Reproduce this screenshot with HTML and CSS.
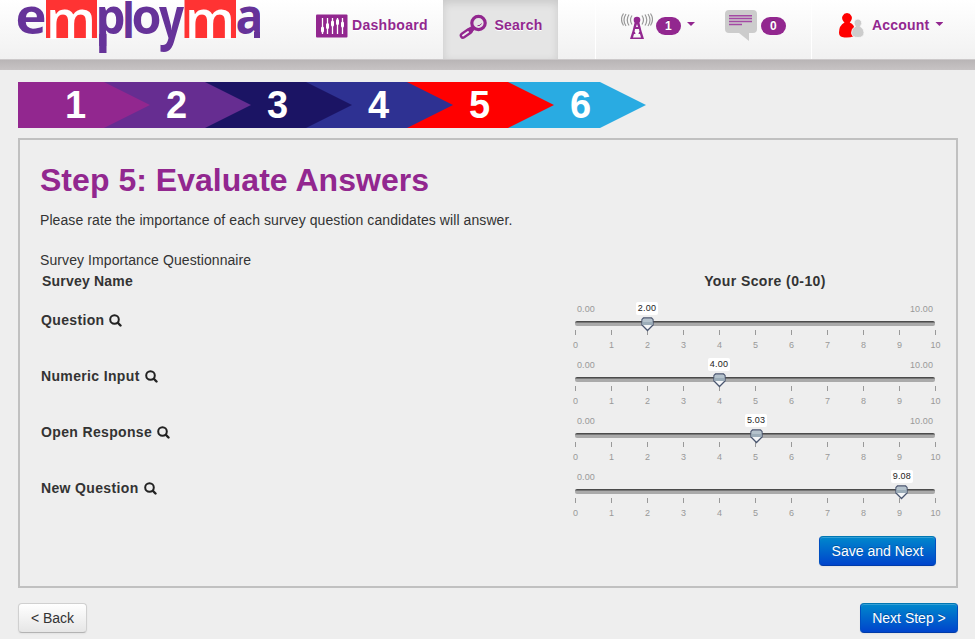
FILE: index.html
```html
<!DOCTYPE html>
<html lang="en">
<head>
<meta charset="utf-8">
<title>Employma - Evaluate Answers</title>
<link rel="stylesheet" href="styles.css">
</head>
<body>
<header class="navbar">
  <svg class="logo" width="260" height="58" viewBox="0 0 260 58" role="img" aria-label="employma">
    <path fill="#f33" d="M46 0h51v38H46zM184.500 0h51.500v38h-51.500z"/>
    <g class="logo-text">
      <text x="15.500" y="33.500" textLength="31" lengthAdjust="spacingAndGlyphs">e</text>
      <text class="logo-m" x="46" y="38.500" textLength="50" lengthAdjust="spacingAndGlyphs">m</text>
      <text x="95.500" y="33.500" textLength="30" lengthAdjust="spacingAndGlyphs">p</text>
      <path d="M99.200 34h7.300v19h-7.300z"/>
      <text x="122" y="37.500" textLength="13" lengthAdjust="spacingAndGlyphs">l</text>
      <text x="131.500" y="33.500" textLength="30" lengthAdjust="spacingAndGlyphs">o</text>
      <text transform="translate(159 38) scale(1 1.180)" textLength="25" lengthAdjust="spacingAndGlyphs">y</text>
      <text class="logo-m" x="185" y="38.500" textLength="50" lengthAdjust="spacingAndGlyphs">m</text>
      <text x="235.500" y="33.500" textLength="28" lengthAdjust="spacingAndGlyphs">a</text>
      <path d="M254 32h6v6h-6z"/>
    </g>
  </svg>
  <nav class="nav">
    <a class="nav-item dashboard">
      <svg width="32" height="24" viewBox="0 0 32 24"><rect y="0.500" width="31.500" height="23" rx="1" fill="#92278f"/><path stroke="#fff" stroke-width="1.300" d="M6.500 4v16M11.500 4v16M16.500 4v16M21.500 4v16M26.500 4v16"/><path stroke="#fff" stroke-width="3" stroke-linecap="round" d="M6.500 14v3M11.500 10.500v3M16.500 8v3M21.500 6.500v3M26.500 9v3"/></svg>
      <span>Dashboard</span>
    </a>
    <a class="nav-item search">
      <svg width="29" height="26" viewBox="0 0 29 26" fill="none"><circle cx="19.500" cy="9" r="6.700" stroke="#92278f" stroke-width="3.200"/><path stroke="#92278f" stroke-width="6.600" stroke-linecap="round" d="M4 21.500l6.500-4.500"/><path stroke="#92278f" stroke-width="5" d="M9 18l5-4"/><path stroke="#eee" stroke-width="2" stroke-linecap="round" d="M4 21.500l5-3.500"/><path stroke="#92278f" stroke-width="1" d="M18.500 11.700q3 .3 4-2.200"/></svg>
      <span>Search</span>
    </a>
    <a class="nav-item alerts">
      <svg width="32" height="26" viewBox="0 0 32 26" fill="none"><circle cx="16" cy="7" r="3.300" fill="#92278f"/><path fill="#92278f" fill-rule="evenodd" d="M14 8h4l2.500 10 2.500 8H9l2.500-8zM16 11l-1 3h2zM14 16l-.5 3h5L18 16zM13 21l-1 3.500h8L19 21z"/><circle cx="16" cy="19.500" r="1.900" fill="#fff"/><path stroke="#999" stroke-width="1.200" d="M11 2.500q-3 4.500 0 9M8 1.500q-3.500 5.500 0 11M5 1q-4 6 0 12M2.500.5q-4 6 0 12M21 2.500q3 4.500 0 9M24 1.500q3.500 5.500 0 11M27 1q4 6 0 12M29.500.5q4 6 0 12"/></svg>
      <span class="badge">1</span><i class="caret"></i>
    </a>
    <a class="nav-item messages">
      <svg width="32" height="32" viewBox="0 0 32 32"><path fill="#ccc" d="M4 0h24q4 0 4 4v15q0 4-4 4h-4v8l-10-8H4q-4 0-4-4V4q0-4 4-4z"/><path stroke="#a349a4" stroke-width="1.500" d="M4 5.700h23M4 8.500h23M4 11.500h23M4 14.500h13"/></svg>
      <span class="badge">0</span>
    </a>
    <a class="nav-item account">
      <svg width="25" height="25" viewBox="0 0 25 25"><path fill="red" d="M8 0a5 5 0 0 1 3.700 8.200l-1 1.300q5 2 5 8l-.5 5.500q-6 2.500-12 1-3.200-.7-3.200-4.500 0-7 5.500-10L4.300 8.200A5 5 0 0 1 8 0z"/><path fill="#ccc" stroke="#f7f7f7" stroke-width=".8" d="M19 6a4 4 0 0 1 2.800 6.500l-.6 1q3.800 2 3.800 6 0 5-6 5t-6.500-4.500q0-5 4-6.500l-.6-1A4 4 0 0 1 19 6z"/></svg>
      <span>Account</span><i class="caret"></i>
    </a>
  </nav>
</header>
<main class="page">
  <ol class="steps">
    <li class="step s1">1</li><li class="step s2">2</li><li class="step s3">3</li><li class="step s4">4</li><li class="step s5">5</li><li class="step s6">6</li>
  </ol>
  <section class="panel">
    <h1>Step 5: Evaluate Answers</h1>
    <p class="intro">Please rate the importance of each survey question candidates will answer.</p>
    <p class="caption">Survey Importance Questionnaire</p>
    <div class="table-head"><span class="name-head">Survey Name</span><span class="score-head">Your Score (0-10)</span></div>
    <div id="questions"></div>
    <div class="panel-actions"><button class="btn primary save">Save and Next</button></div>
  </section>
  <footer class="pager"><button class="btn back">&lt; Back</button><button class="btn primary next">Next Step &gt;</button></footer>
</main>
<script src="script.js"></script>
</body>
</html>
```
FILE: script.js
```js
const questions = [["Question", 2], ["Numeric Input", 4], ["Open Response", 5.03], ["New Question", 9.08]];
const ticks = Array.from({ length: 11 }, (_, n) => `<span class="tick">${n}</span>`).join("");
// The upper limit is hidden once the value bubble would run into it.
document.getElementById("questions").innerHTML = questions.map(([name, value]) => `
  <div class="question">
    <div class="question-name"><span>${name}</span><svg width="13" height="13" viewBox="0 0 13 13" fill="none" stroke="#222" stroke-width="2"><circle cx="5.500" cy="5.500" r="4.300"/><path stroke-width="2.400" stroke-linecap="round" d="M9 9l2.500 2.500"/></svg></div>
    <div class="slider">
      <div class="limits"><span>0.00</span>${value > 9 ? "" : "<span>10.00</span>"}</div>
      <div class="track"></div>
      <div class="scale">${ticks}</div>
      <div class="pointer" style="left:${value * 10}%">
        <span class="value">${value.toFixed(2)}</span>
        <svg width="13" height="15" viewBox="0 0 13 15"><path d="M2.500 1h8L12 2.500V8l-5.500 5.500L1 8V2.500z" fill="#f4f6f8" stroke="#4a5670" stroke-width="1.300"/><path d="M2.700 1.700h7.600l1 1V8H1.700V2.700z" fill="#b4c2cc"/><path d="M1.700 5h9.600v3H1.700z" fill="#9cadb9"/></svg>
      </div>
    </div>
  </div>`).join("");
```
FILE: styles.css
```css
* { box-sizing: border-box; }
body { margin: 0; height: 639px; overflow: hidden; background: #eee; color: #333; font: 14px/20px "Liberation Sans", Arial, sans-serif; }
h1, p, ol { margin: 0; padding: 0; }
.navbar { display: flex; height: 70px; background: linear-gradient(#fff, #f1f1f1) 0 0 / 100% 59px no-repeat, linear-gradient(#b9b5b6, #c7c3c4) 0 60px / 100% 10px no-repeat, #ccc9ca; }
.logo { flex: none; }
.logo-text { font: 700 49px "Open Sans", "Noto Sans", sans-serif; fill: #639; }
.logo-m { fill: #fff; font-size: 55px; font-weight: 600; }
.nav { display: flex; height: 60px; flex: 1; border-bottom: 1px solid #ccc9ca; color: #92278f; font-weight: bold; letter-spacing: .3px; text-shadow: 0 1px 0 #fff; }
.nav-item { display: flex; align-items: flex-start; padding-top: 15px; }
.nav-item svg { flex: none; }
.dashboard { width: 183px; padding-left: 56px; gap: 4px; }
.dashboard svg, .search svg { margin-top: -1px; }
.search { width: 115px; padding-left: 16px; gap: 6.500px; background: #e5e5e5; box-shadow: inset 0 3px 8px rgba(0,0,0,.125); letter-spacing: .2px; }
.alerts { margin-left: 37px; width: 111px; padding-left: 25px; border-left: 1px solid #fff; }
.alerts svg { margin-top: -2px; }
.messages { width: 106px; padding-left: 19px; border-right: 1px solid #fff; }
.messages svg { margin-top: -5px; }
.account { padding-left: 27px; letter-spacing: .2px; }
.account svg { margin: -2px 8px 0 0; }
.badge { width: 25px; height: 18px; margin: 2px 0 0 3px; border-radius: 9px; background: #92278f; color: #fff; font: bold 12px/18px "Liberation Sans", Arial, sans-serif; text-align: center; text-shadow: 0 -1px 0 rgba(0,0,0,.25); }
.messages .badge { margin-left: 4px; }
.caret { width: 8px; height: 4px; margin: 7px 0 0 6px; background: #92278f; clip-path: polygon(0 0, 100% 0, 50% 100%); }
.page { padding: 12px 17px 0 18px; }
.steps { display: flex; list-style: none; }
.step { position: relative; height: 46px; width: 147px; margin-left: -46px; padding-left: 62px; color: #fff; font-size: 38px; font-weight: bold; line-height: 46px; clip-path: polygon(0 0, calc(100% - 46px) 0, 100% 50%, calc(100% - 46px) 100%, 0 100%); }
.s1 { z-index: 6; width: 132px; margin-left: 0; padding-left: 47px; background: #92278f; }
.s2 { z-index: 5; background: #662d91; }
.s3 { z-index: 4; background: #1b1464; }
.s4 { z-index: 3; background: #2e3192; }
.s5 { z-index: 2; background: red; }
.s6 { z-index: 1; width: 138px; background: #29abe2; }
.panel { height: 450px; margin-top: 10px; padding: 20px 20px 0; border: 2px solid #c0c0c0; }
h1 { color: #92278f; font-size: 32px; line-height: 40px; letter-spacing: .03px; }
.intro { margin-top: 10px; letter-spacing: .085px; }
.caption { margin-top: 20px; letter-spacing: .085px; }
.table-head { display: flex; height: 22px; padding-top: 1px; font-weight: bold; }
.name-head { width: 535px; padding-left: 2px; letter-spacing: .2px; }
.score-head { width: 361px; padding-left: 19px; text-align: center; letter-spacing: .4px; }
.question { display: flex; height: 56px; }
.question-name { display: flex; gap: 5px; width: 535px; padding: 18px 0 0 1px; font-weight: bold; letter-spacing: .35px; }
.question-name svg { margin-top: 4px; }
.slider { position: relative; flex: none; width: 360px; height: 56px; color: #999; font-size: 9px; line-height: 10px; }
.limits { display: flex; justify-content: space-between; height: 29px; padding: 12px 2px 0; letter-spacing: .1px; }
.track { height: 5px; border-radius: 2px; background: linear-gradient(#4b4b4b 0 20%, #777 20% 40%, #aaa 40%); }
.scale { display: flex; width: 396px; margin: 4px 0 0 -17.500px; }
.tick { display: flex; flex: 0 0 36px; flex-direction: column; align-items: center; gap: 5px; }
.tick::before { content: ""; width: 1px; height: 5px; background: #999; }
.pointer { position: absolute; top: 10px; display: flex; flex-direction: column; align-items: center; width: 24px; margin-left: -12px; color: #222; }
.value { width: 22px; height: 13px; border-radius: 2px; background: #fff; line-height: 13px; text-align: center; letter-spacing: .2px; }
.pointer svg { margin-top: 2px; }
.panel-actions { display: flex; justify-content: flex-end; padding-top: 20px; }
.btn { height: 30px; padding: 0; border: 1px solid #c4c4c4; border-color: #d0d0d0 #d0d0d0 #b3b3b3; border-radius: 4px; background: linear-gradient(#fff, #e6e6e6); color: #333; font: 14px/20px "Liberation Sans", Arial, sans-serif; box-shadow: inset 0 1px 0 rgba(255,255,255,.2), 0 1px 2px rgba(0,0,0,.05); }
.primary { border-color: #0077b3 #004fc0 #003ba8; background: linear-gradient(#08c, #04c); color: #fff; text-shadow: 0 -1px 0 rgba(0,0,0,.25); }
.save { width: 117px; }
.back { width: 69px; }
.next { width: 98px; }
.pager { display: flex; justify-content: space-between; margin-top: 15px; }
```
